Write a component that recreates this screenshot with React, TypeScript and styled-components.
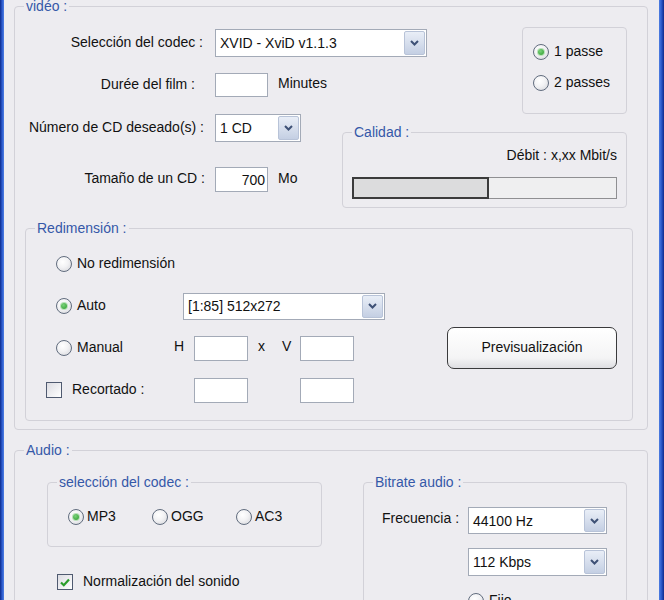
import React from "react";
import styled, { createGlobalStyle } from "styled-components";

const GlobalStyle = createGlobalStyle`
  html, body {
    margin: 0;
    padding: 0;
    background: #edecf0;
  }
  body {
    font-family: "Liberation Sans", Arial, sans-serif;
    font-size: 14px;
    color: #111;
  }
`;

const Window = styled.div`
  display: flex;
  width: 664px;
  height: 600px;
  overflow: hidden;
`;

const Frame = styled.div<{ $side: "left" | "right" }>`
  flex: 0 0 ${(p) => (p.$side === "left" ? 4 : 5)}px;
  background: linear-gradient(
    to ${(p) => (p.$side === "left" ? "right" : "left")},
    #0c2a8c,
    #2d5cce 55%,
    #4f7fe2
  );
`;

const Client = styled.div`
  flex: 1;
  display: flex;
  flex-direction: column;
  gap: 20px;
  padding: 6px 11px 0 10px;
  background: #edecf0;
`;

const Group = styled.div<{ $w?: number; $h?: number }>`
  position: relative;
  box-sizing: border-box;
  flex-shrink: 0;
  border: 1px solid #d2d1d8;
  border-radius: 4px;
  ${(p) => (p.$w ? `width: ${p.$w}px;` : "")}
  ${(p) => (p.$h ? `height: ${p.$h}px;` : "")}
`;

const Legend = styled.span`
  position: absolute;
  top: -9px;
  left: 9px;
  padding: 0 2px;
  line-height: 16px;
  white-space: nowrap;
  color: #3558a8;
  background: #edecf0;
`;

/* ---------- video ---------- */

const VideoGroup = styled(Group)`
  padding-top: 20px;
`;

const Section = styled.div<{ $h: number }>`
  display: flex;
  justify-content: space-between;
  align-items: flex-start;
  height: ${(p) => p.$h}px;
  padding-right: 20px;
`;

const FormCol = styled.div<{ $gap: number; $top?: number }>`
  display: flex;
  flex-direction: column;
  gap: ${(p) => p.$gap}px;
  margin-top: ${(p) => p.$top ?? 0}px;
`;

const FieldRow = styled.div`
  display: flex;
  align-items: center;
  gap: 10px;
`;

const Label = styled.span<{ $pr?: number }>`
  box-sizing: border-box;
  width: 190px;
  padding-right: ${(p) => p.$pr ?? 0}px;
  margin-top: -3px;
  text-align: right;
  white-space: nowrap;
`;

const Unit = styled.span`
  margin-top: -4px;
`;

const Combo = styled.div<{ $w: number; $h: number }>`
  box-sizing: border-box;
  display: flex;
  align-items: center;
  width: ${(p) => p.$w}px;
  height: ${(p) => p.$h}px;
  padding: 1px;
  border: 1px solid #a3aab7;
  background: #fff;
`;

const ComboText = styled.span`
  flex: 1;
  padding-left: 3px;
  white-space: nowrap;
  overflow: hidden;
`;

const DropBtn = styled.span`
  box-sizing: border-box;
  align-self: stretch;
  width: 21px;
  display: flex;
  align-items: center;
  justify-content: center;
  border: 1px solid #b8c3d8;
  border-radius: 2px;
  background: linear-gradient(#e9eef7, #c4cfe3);
`;

const TextBox = styled.div<{ $w: number; $h: number }>`
  box-sizing: border-box;
  width: ${(p) => p.$w}px;
  height: ${(p) => p.$h}px;
  padding: 3px 2px 0;
  border: 1px solid #a3aab7;
  background: #fff;
  text-align: right;
  line-height: 18px;
`;

const PassesBox = styled(Group)`
  display: flex;
  flex-direction: column;
  gap: 13px;
  padding: 15px 0 0 10px;
`;

const CalidadBox = styled(Group)`
  margin-top: 18px;
  padding: 14px 9px 0;
`;

const Debit = styled.div`
  text-align: right;
  line-height: 16px;
`;

const Track = styled.div`
  box-sizing: border-box;
  display: flex;
  height: 22px;
  margin-top: 14px;
  border: 1px solid #8f8f92;
  background: #efeff0;
`;

const Fill = styled.div<{ $pct: number }>`
  width: ${(p) => p.$pct}%;
  margin: -1px;
  border: 2px solid #3b3b3b;
  background: #dcdcdd;
`;

/* ---------- redimension ---------- */

const RedimBox = styled(Group)`
  margin: 20px 14px 0 10px;
  display: grid;
  grid-template-columns: 128px 20px 54px 24px 28px 54px 1fr 170px;
  grid-template-rows: repeat(4, 42px);
  align-items: center;
  padding: 14px 15px 9px 20px;
`;

const Cell = styled.div<{ $col: string; $row: number; $pl?: number }>`
  grid-column: ${(p) => p.$col};
  grid-row: ${(p) => p.$row};
  padding-left: ${(p) => p.$pl ?? 0}px;
  display: flex;
  align-items: center;
`;

const Letter = styled.span`
  margin-top: -5px;
`;

const PushButton = styled.button`
  box-sizing: border-box;
  width: 170px;
  height: 42px;
  border: 1px solid #3a3a3c;
  border-radius: 7px;
  background: linear-gradient(#ffffff, #f4f4f5 75%, #dedee2);
  font: inherit;
  color: #111;
  padding: 0 0 2px;
`;

/* ---------- radio / checkbox ---------- */

const Choice = styled.span<{ $w?: number; $gap?: number }>`
  display: inline-flex;
  align-items: center;
  gap: ${(p) => p.$gap ?? 5}px;
  height: 18px;
  white-space: nowrap;
  ${(p) => (p.$w ? `width: ${p.$w}px;` : "")}
`;

const RadioDot = styled.span<{ $on?: boolean }>`
  box-sizing: border-box;
  flex: 0 0 16px;
  height: 16px;
  display: flex;
  align-items: center;
  justify-content: center;
  border: 1px solid #616c7e;
  border-radius: 50%;
  background: radial-gradient(circle at 40% 35%, #ffffff 0%, #f2f2f4 45%, #d2d3d8 100%);
  &::after {
    content: "";
    display: ${(p) => (p.$on ? "block" : "none")};
    width: 6px;
    height: 6px;
    border-radius: 50%;
    background: radial-gradient(circle at 40% 35%, #7ad27a, #2b9c2b);
    box-shadow: 0 0 0 1px #b9e0b9;
  }
`;

const CheckSquare = styled.span`
  box-sizing: border-box;
  flex: 0 0 16px;
  height: 16px;
  display: flex;
  align-items: center;
  justify-content: center;
  border: 1px solid #4f5a70;
  background: linear-gradient(135deg, #dcdce2, #ffffff);
`;

const ChoiceText = styled.span`
  margin-top: -2px;
`;

const Chevron = () => (
  <svg width="9" height="6" viewBox="0 0 9 6">
    <polyline points="1,1 4.5,4.5 8,1" fill="none" stroke="#3e5176" strokeWidth="2" />
  </svg>
);

const CheckMark = () => (
  <svg width="10" height="9" viewBox="0 0 10 9">
    <polyline points="1,4.5 3.8,7.2 9,1.5" fill="none" stroke="#2a9d2a" strokeWidth="2.2" />
  </svg>
);

const Select = ({ w, h, value }: { w: number; h: number; value: string }) => (
  <Combo $w={w} $h={h}>
    <ComboText>{value}</ComboText>
    <DropBtn>
      <Chevron />
    </DropBtn>
  </Combo>
);

const Radio = ({ label, on, w, gap }: { label?: string; on?: boolean; w?: number; gap?: number }) => (
  <Choice $w={w} $gap={gap}>
    <RadioDot $on={on} />
    {label && <ChoiceText>{label}</ChoiceText>}
  </Choice>
);

const Check = ({ label, on }: { label?: string; on?: boolean }) => (
  <Choice $gap={10}>
    <CheckSquare>{on && <CheckMark />}</CheckSquare>
    {label && <ChoiceText>{label}</ChoiceText>}
  </Choice>
);

/* ---------- audio ---------- */

const AudioBody = styled.div`
  display: flex;
  gap: 41px;
  padding: 31px 0 0 32px;
`;

const AudioLeft = styled.div`
  display: flex;
  flex-direction: column;
`;

const CodecBox = styled(Group)`
  display: flex;
  padding: 25px 0 0 20px;
`;

const CheckRow = styled.div<{ $top: number; $pl: number; $gap?: number }>`
  display: flex;
  gap: ${(p) => p.$gap ?? 0}px;
  margin-top: ${(p) => p.$top}px;
  padding-left: ${(p) => p.$pl}px;
`;

const BitrateBox = styled(Group)`
  display: grid;
  grid-template-columns: 86px 139px;
  grid-template-rows: 27px 27px;
  row-gap: 14px;
  align-items: center;
  align-content: start;
  padding: 24px 0 0 18px;
`;

const FreqLabel = styled.span`
  margin-top: -6px;
`;

const FijoCell = styled.div`
  grid-column: 2;
  margin-top: 3px;
`;

export default function App() {
  return (
    <>
      <GlobalStyle />
      <Window>
        <Frame $side="left" />
        <Client>
          <VideoGroup $w={634} $h={424}>
            <Legend>vidéo :</Legend>
            <Section $h={87}>
              <FormCol $gap={16} $top={2}>
                <FieldRow>
                  <Label $pr={2}>Selección del codec :</Label>
                  <Select w={212} h={28} value="XVID - XviD v1.1.3" />
                </FieldRow>
                <FieldRow>
                  <Label $pr={10}>Durée del film :</Label>
                  <TextBox $w={53} $h={24} />
                  <Unit>Minutes</Unit>
                </FieldRow>
              </FormCol>
              <PassesBox $w={105} $h={87}>
                <Radio label="1 passe" on />
                <Radio label="2 passes" />
              </PassesBox>
            </Section>
            <Section $h={94}>
              <FormCol $gap={25}>
                <FieldRow>
                  <Label $pr={1}>Número de CD deseado(s) :</Label>
                  <Select w={86} h={28} value="1 CD" />
                </FieldRow>
                <FieldRow>
                  <Label>Tamaño de un CD :</Label>
                  <TextBox $w={53} $h={25}>700</TextBox>
                  <Unit>Mo</Unit>
                </FieldRow>
              </FormCol>
              <CalidadBox $w={285} $h={76}>
                <Legend>Calidad :</Legend>
                <Debit>Débit : x,xx Mbit/s</Debit>
                <Track>
                  <Fill $pct={50.6} />
                </Track>
              </CalidadBox>
            </Section>
            <RedimBox $h={193}>
              <Legend>Redimensión :</Legend>
              <Cell $col="1 / 5" $row={1} $pl={10}>
                <Radio label="No redimensión" />
              </Cell>
              <Cell $col="1" $row={2} $pl={10}>
                <Radio label="Auto" on />
              </Cell>
              <Cell $col="2 / 8" $row={2} $pl={9}>
                <Select w={202} h={27} value="[1:85] 512x272" />
              </Cell>
              <Cell $col="1" $row={3} $pl={10}>
                <Radio label="Manual" />
              </Cell>
              <Cell $col="2" $row={3}>
                <Letter>H</Letter>
              </Cell>
              <Cell $col="3" $row={3}>
                <TextBox $w={54} $h={25} />
              </Cell>
              <Cell $col="4" $row={3} $pl={10}>
                <Letter>x</Letter>
              </Cell>
              <Cell $col="5" $row={3} $pl={10}>
                <Letter>V</Letter>
              </Cell>
              <Cell $col="6" $row={3}>
                <TextBox $w={54} $h={25} />
              </Cell>
              <Cell $col="8" $row={3}>
                <PushButton>Previsualización</PushButton>
              </Cell>
              <Cell $col="1 / 3" $row={4}>
                <Check label="Recortado :" />
              </Cell>
              <Cell $col="3" $row={4}>
                <TextBox $w={54} $h={25} />
              </Cell>
              <Cell $col="6" $row={4}>
                <TextBox $w={54} $h={25} />
              </Cell>
            </RedimBox>
          </VideoGroup>

          <Group $w={634} $h={220}>
            <Legend>Audio :</Legend>
            <AudioBody>
              <AudioLeft>
                <CodecBox $w={275} $h={65}>
                  <Legend>selección del codec :</Legend>
                  <Radio label="MP3" on w={84} gap={3} />
                  <Radio label="OGG" w={84} gap={3} />
                  <Radio label="AC3" w={84} gap={3} />
                </CodecBox>
                <CheckRow $top={26} $pl={10}>
                  <Check label="Normalización del sonido" on />
                </CheckRow>
                <CheckRow $top={9} $pl={153} $gap={79}>
                  <Check />
                  <Check />
                </CheckRow>
              </AudioLeft>
              <BitrateBox $w={264} $h={200}>
                <Legend>Bitrate audio :</Legend>
                <FreqLabel>Frecuencia :</FreqLabel>
                <Select w={139} h={27} value="44100 Hz" />
                <span />
                <Select w={139} h={28} value="112 Kbps" />
                <FijoCell>
                  <Radio label="Fijo" />
                </FijoCell>
              </BitrateBox>
            </AudioBody>
          </Group>
        </Client>
        <Frame $side="right" />
      </Window>
    </>
  );
}
